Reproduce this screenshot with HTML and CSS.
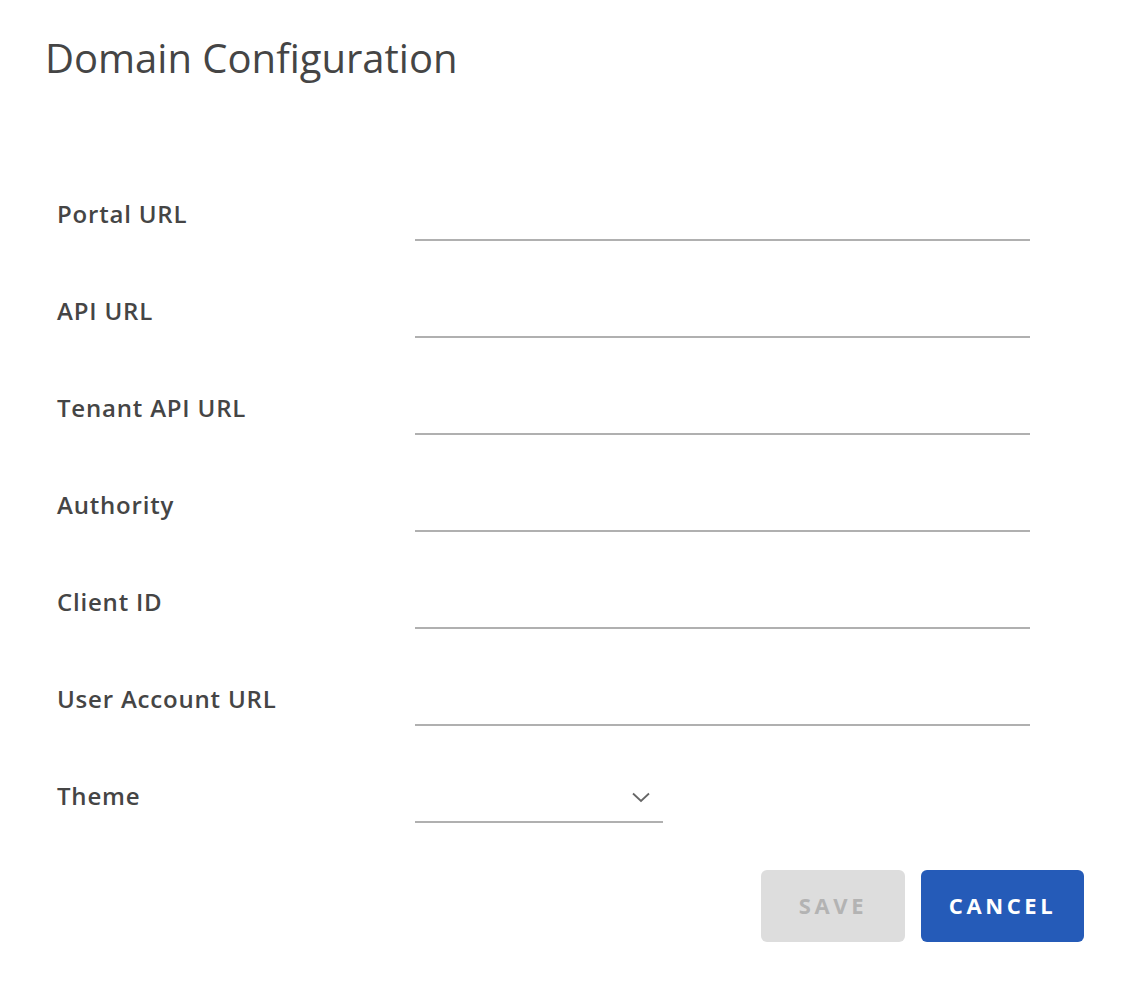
FILE: index.html
```html
<!DOCTYPE html>
<html>
<head>
    <meta name="viewport" content="width=device-width, initial-scale=1">
    <title>Domain Configuration</title>
    <link rel="stylesheet" href="styles.css">
</head>
<body>
    <div class="modal">
        <h1 class="modal-title">Domain Configuration</h1>

        <form class="config-form">
            <div class="form-row">
                <label for="portalUrl">Portal URL</label>
                <input type="text" id="portalUrl" class="text-input">
            </div>
            <div class="form-row">
                <label for="apiUrl">API URL</label>
                <input type="text" id="apiUrl" class="text-input">
            </div>
            <div class="form-row">
                <label for="tenantApiUrl">Tenant API URL</label>
                <input type="text" id="tenantApiUrl" class="text-input">
            </div>
            <div class="form-row">
                <label for="authority">Authority</label>
                <input type="text" id="authority" class="text-input">
            </div>
            <div class="form-row">
                <label for="clientId">Client ID</label>
                <input type="text" id="clientId" class="text-input">
            </div>
            <div class="form-row">
                <label for="userAccountUrl">User Account URL</label>
                <input type="text" id="userAccountUrl" class="text-input">
            </div>
            <div class="form-row">
                <label for="theme">Theme</label>
                <div class="select-wrapper">
                    <select id="theme" class="select-input">
                        <option value=""></option>
                        <option value="light">Light</option>
                        <option value="dark">Dark</option>
                    </select>
                    <svg class="select-caret" width="18" height="11" viewBox="0 0 18 11">
                        <path d="M1 1.5 L9 9 L17 1.5" fill="none" stroke="#666" stroke-width="1.8"/>
                    </svg>
                </div>
            </div>

            <div class="modal-footer">
                <button type="button" class="btn btn-disabled" disabled>Save</button>
                <button type="button" class="btn btn-primary">Cancel</button>
            </div>
        </form>
    </div>
</body>
</html>
```

FILE: styles.css
```css
body {
    margin: 0;
    background-color: #fff;
    font-family: "Open Sans", "Noto Sans", Arial, sans-serif;
    color: #454545;
}
.modal {
    width: 1040px;
    padding: 34px 0 0 45px;
}
.modal-title {
    margin: 0;
    font-size: 40px;
    font-weight: 400;
    line-height: 48px;
    color: #454545;
}
.config-form {
    margin-top: 99px;
    padding-left: 12px;
}
.form-row {
    display: grid;
    grid-template-columns: 358px 615px;
    align-items: end;
    height: 97px;
}
.form-row:first-child {
    height: 60px;
}
.form-row label {
    font-size: 24px;
    font-weight: 600;
    letter-spacing: 0.8px;
    line-height: 30px;
    padding-bottom: 12px;
    color: #454545;
    white-space: nowrap;
}
.text-input,
.select-input {
    box-sizing: border-box;
    width: 100%;
    height: 40px;
    border: none;
    border-bottom: 2px solid #b0b0b0;
    background: transparent;
    font-family: inherit;
    font-size: 20px;
    color: #454545;
    outline: none;
    padding: 0;
}
.select-wrapper {
    position: relative;
    width: 248px;
}
.select-input {
    appearance: none;
    -webkit-appearance: none;
}
.select-caret {
    position: absolute;
    right: 13px;
    top: 9px;
    pointer-events: none;
}
.modal-footer {
    display: flex;
    justify-content: flex-end;
    gap: 16px;
    width: 1027px;
    margin-top: 47px;
}
.btn {
    height: 72px;
    padding: 0 0 3px;
    border: none;
    border-radius: 6px;
    font-family: inherit;
    font-size: 22px;
    font-weight: 700;
    letter-spacing: 3.6px;
    text-transform: uppercase;
    cursor: pointer;
}
.btn-disabled {
    width: 144px;
    background-color: #dddddd;
    color: #b3b3b3;
    cursor: not-allowed;
}
.btn-primary {
    width: 163px;
    background-color: #255bb8;
    color: #fff;
}
```
